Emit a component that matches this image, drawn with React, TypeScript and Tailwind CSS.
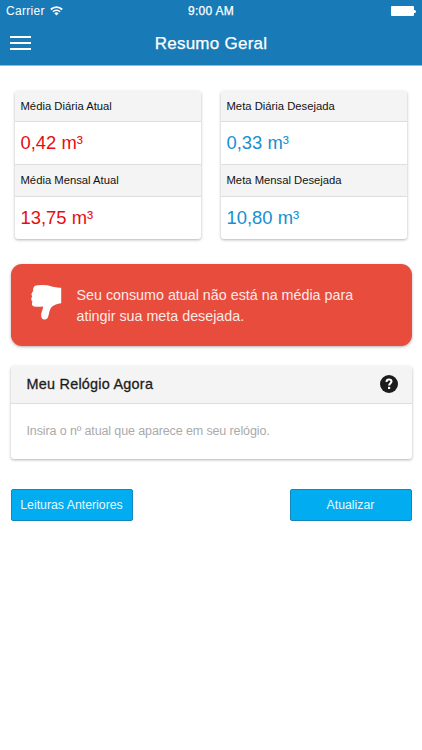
import { useState } from 'react';

interface Reading {
  label: string;
  value: string;
}

interface ReadingCardProps {
  readings: Reading[];
  valueClass: string;
}

const currentReadings: Reading[] = [
  { label: 'Média Diária Atual', value: '0,42 m³' },
  { label: 'Média Mensal Atual', value: '13,75 m³' },
];

const targetReadings: Reading[] = [
  { label: 'Meta Diária Desejada', value: '0,33 m³' },
  { label: 'Meta Mensal Desejada', value: '10,80 m³' },
];

function WifiIcon() {
  return (
    <svg viewBox="0 0 13 10" className="w-[13px] h-[10px]" fill="none" stroke="#fff">
      <path d="M0.8 3.5a8.1 8.1 0 0 1 11.4 0" strokeWidth="1.8" />
      <path d="M2.9 5.7a5.1 5.1 0 0 1 7.2 0" strokeWidth="1.6" />
      <path d="M4.3 7.3a3.1 3.1 0 0 1 4.4 0L6.5 9.6z" fill="#fff" stroke="none" />
    </svg>
  );
}

function ThumbsDownIcon() {
  return (
    <svg viewBox="0 0 31 35" className="w-[31px] h-[35px] shrink-0 mb-[6px]" fill="#fff">
      <path d="M5 0.6C8.5-0.1 14.5-0.1 18 0.7C21.5 1.5 24.5 2.7 30.2 2.7V18.3C26 18.6 22 20.3 20.2 22.5C18.4 24.8 18.3 28 17.2 31.5C16.4 34 15.3 34.7 13.3 34.5C11 34.3 10 32.5 10.2 29.5C10.4 26.5 12 24 12.2 21.4C9 21.8 5.500 22 3 21.400C0.800 20.900 0.400 18.300 1.600 16.600C-0.100 15.500-0.100 12.600 1.300 11.500C0 10.200 0.400 7.400 2.300 6.300C1.500 4.500 2.500 1.200 5 0.600Z" />
    </svg>
  );
}

function HelpIcon() {
  return (
    <svg viewBox="0 0 18 18" className="w-[18px] h-[18px] mb-[2px]">
      <circle cx="9" cy="9" r="9" fill="#1c1c1c" />
      <path
        d="M6.500 6.900c0-1.500 1.100-2.400 2.500-2.400s2.500 0.800 2.500 2.100c0 1.800-2.400 1.800-2.400 3.900"
        fill="none"
        stroke="#fff"
        strokeWidth="2"
      />
      <rect x="8" y="11.800" width="2.200" height="2.200" fill="#fff" />
    </svg>
  );
}

function ReadingCard({ readings, valueClass }: ReadingCardProps) {
  return (
    <div className="flex-1 h-[148px] rounded-[3px] overflow-hidden bg-white shadow-[0_1px_3px_rgba(0,0,0,0.3)]">
      {readings.map((reading, index) => (
        <div key={reading.label}>
          <div
            className={`${index > 0 ? 'border-t h-[33px]' : 'pt-px h-[31px]'} flex items-center px-[5.500px] bg-[#f4f4f4] border-b border-[#dedede] text-[11.250px] text-[#111]`}
          >
            {reading.label}
          </div>
          <div className={`h-[42px] flex items-center px-[5.500px] text-[18.400px] ${valueClass}`}>
            {reading.value}
          </div>
        </div>
      ))}
    </div>
  );
}

export default function App() {
  const [reading, setReading] = useState('');

  return (
    <div className="w-full h-[750px] bg-white overflow-hidden font-['Liberation_Sans',Arial,sans-serif]">
      {/* Status bar + header */}
      <header className="h-[66px] bg-[#187bb7] border-b border-[#8cbcdc] text-white">
        <div className="h-[22px] grid grid-cols-3 items-center px-[6px] text-[12px]">
          <div className="flex items-center gap-[5px]">
            <span className="tracking-[0.3px]">Carrier</span>
            <WifiIcon />
          </div>
          <span className="text-center tracking-[0.3px] [-webkit-text-stroke:0.25px_white]">9:00 AM</span>
          <div className="flex items-center justify-end">
            <span className="w-[23px] h-[10px] bg-white rounded-[1px]" />
            <span className="w-[2px] h-[3px] bg-white rounded-r-full" />
          </div>
        </div>
        <div className="h-[43px] grid grid-cols-[1fr_auto_1fr] items-center px-[10px]">
          <button className="flex flex-col gap-[4px] w-[21px] mb-px" aria-label="Menu">
            <span className="h-[2px] bg-white" />
            <span className="h-[2px] bg-white" />
            <span className="h-[2px] bg-white" />
          </button>
          <h1 className="text-[17px] tracking-[0.250px] [-webkit-text-stroke:0.25px_white]">Resumo Geral</h1>
        </div>
      </header>

      <main>
        <div className="flex gap-[20px] px-[15px] pt-[25px]">
          <ReadingCard readings={currentReadings} valueClass="text-[#e60d12]" />
          <ReadingCard readings={targetReadings} valueClass="text-[#1690d0]" />
        </div>

        {/* Alert */}
        <div className="mx-[10.500px] mt-[25px] h-[82px] flex items-center pl-[20px] gap-[15px] rounded-[11px] bg-[#e84c3d] text-white shadow-[0_1px_3px_rgba(0,0,0,0.3)]">
          <ThumbsDownIcon />
          <p className="pt-px text-[14.300px] leading-[20.500px] text-[#fdeae8]">
            Seu consumo atual não está na média para
            <br />
            atingir sua meta desejada.
          </p>
        </div>

        {/* Current meter */}
        <section className="mx-[10.500px] mt-[20px] h-[93px] rounded-[3px] overflow-hidden bg-white shadow-[0_1px_3px_rgba(0,0,0,0.3)]">
          <div className="h-[38px] flex items-center justify-between pl-[16px] pr-[14px] bg-[#f4f4f4] border-b border-[#dedede]">
            <h2 className="text-[14.400px] tracking-[0.250px] text-[#1c1c1c] [-webkit-text-stroke:0.3px_#1c1c1c]">
              Meu Relógio Agora
            </h2>
            <HelpIcon />
          </div>
          <input
            type="text"
            value={reading}
            onChange={(e) => setReading(e.target.value)}
            placeholder="Insira o nº atual que aparece em seu relógio."
            className="w-full h-[53px] px-[16px] text-[12.500px] tracking-[-0.120px] placeholder:text-[#aaaaaa] outline-none"
          />
        </section>

        <div className="mx-[10.500px] mt-[30px] flex justify-between">
          <button className="w-[122px] h-[32px] rounded-[2px] border border-[#1586bd] bg-[#01adf0] text-[12.300px] text-[#e8f8ff]">
            Leituras Anteriores
          </button>
          <button className="w-[122px] h-[32px] rounded-[2px] border border-[#1586bd] bg-[#01adf0] text-[12.300px] text-[#e8f8ff]">
            Atualizar
          </button>
        </div>
      </main>
    </div>
  );
}
